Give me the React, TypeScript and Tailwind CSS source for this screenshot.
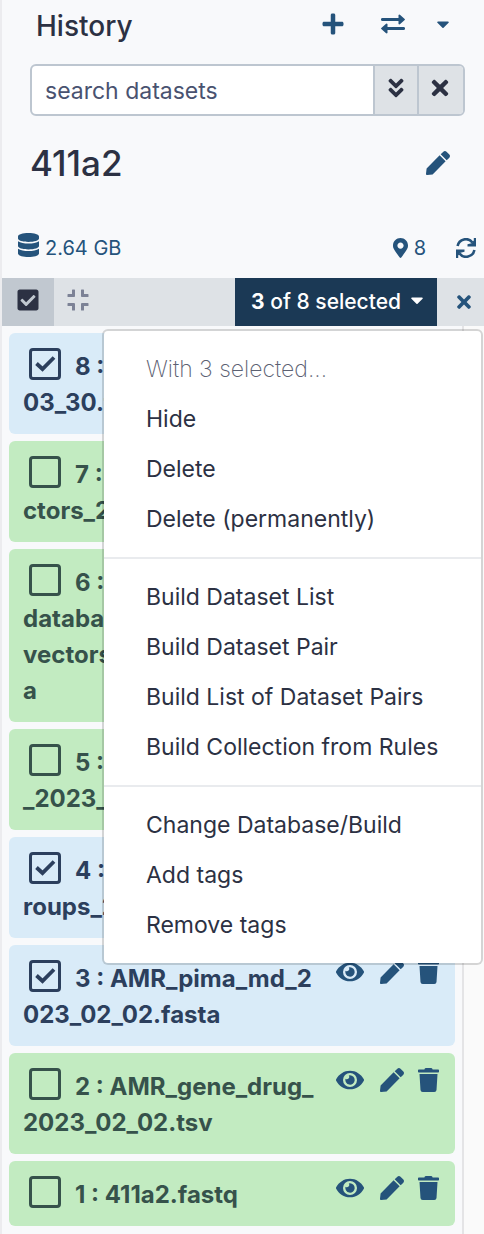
import React from "react";
import {
  FaPlus, FaPen, FaDatabase, FaMapMarkerAlt, FaCheckSquare, FaCompress,
  FaTimes, FaAngleDoubleDown, FaEye, FaTrash, FaCaretDown,
} from "react-icons/fa";

type Dataset = { hid: number; lines: string[]; selected: boolean };

const datasets: Dataset[] = [
  { hid: 8, lines: ["AMR_", "03_30.tsv"], selected: true },
  { hid: 7, lines: ["AMR_ve", "ctors_2023"], selected: false },
  { hid: 6, lines: ["AMR_", "database_", "vectors.fast", "a"], selected: false },
  { hid: 5, lines: ["AMR", "_2023_02"], selected: false },
  { hid: 4, lines: ["AMR_g", "roups_2023"], selected: true },
  { hid: 3, lines: ["AMR_pima_md_2", "023_02_02.fasta"], selected: true },
  { hid: 2, lines: ["AMR_gene_drug_", "2023_02_02.tsv"], selected: false },
  { hid: 1, lines: ["411a2.fastq"], selected: false },
];

const menuGroups = [
  ["Hide", "Delete", "Delete (permanently)"],
  ["Build Dataset List", "Build Dataset Pair", "Build List of Dataset Pairs", "Build Collection from Rules"],
  ["Change Database/Build", "Add tags", "Remove tags"],
];

function ExchangeIcon() {
  return (
    <svg viewBox="0 0 24 20" className="h-5 w-6" aria-hidden="true">
      <path d="M1.4 5.500H18M22.600 14.500H6" stroke="currentColor" strokeWidth="2.900" strokeLinecap="round" fill="none" />
      <path d="M17.500 1Q18.300 .2 19.200 .9L23.700 4.900Q24.200 5.500 23.700 6.100L19.200 10.100Q18.300 10.800 17.500 10ZM6.500 10Q5.700 9.200 4.800 9.900L.3 13.900Q-.2 14.500 .3 15.100L4.800 19.100Q5.700 19.800 6.500 19Z" fill="currentColor" />
    </svg>
  );
}

function SyncIcon() {
  return (
    <svg viewBox="0 0 20 20" className="size-5" aria-hidden="true">
      <path d="M1.600 8A8.400 8.400 0 0 1 16.500 4.500M18.400 12A8.400 8.400 0 0 1 3.500 15.500" fill="none" stroke="currentColor" strokeWidth="2.600" />
      <path d="M20 0V8.400H11.500V6.200L15.500 5.200L17.800 2.600V0ZM0 20V11.600H8.500V13.800L4.500 14.800L2.200 17.400V20Z" fill="currentColor" />
    </svg>
  );
}

function DatasetRow({ item }: { item: Dataset }) {
  return (
    <li
      className={
        item.selected
          ? "flex items-start rounded-md bg-[#d9ebf8] pt-4 pr-4 pb-[13px] pl-3.5 text-[#2c3f5d]"
          : "flex items-start rounded-md bg-[#c2ebc1] pt-4 pr-4 pb-[13px] pl-3.5 text-[#36524b]"
      }
    >
      <label className="min-w-0 flex-1 text-2xl leading-9 font-bold whitespace-nowrap">
        <span className="mr-3.5 ml-1.5 inline-grid size-8 -translate-y-1 place-items-center align-middle">
          <input
            type="checkbox"
            defaultChecked={item.selected}
            className="peer col-start-1 row-start-1 size-8 appearance-none rounded-[4px] border-3 border-current"
          />
          <svg viewBox="0 0 32 32" className="pointer-events-none col-start-1 row-start-1 hidden size-8 peer-checked:block" aria-hidden="true">
            <path d="M7.500 15.500L13.500 21L25 9.500" fill="none" stroke="currentColor" strokeWidth="3.800" />
          </svg>
        </span>
        {item.hid} : {item.lines.map((line, i) => (
          <React.Fragment key={line}>
            {i > 0 && <br />}
            {line}
          </React.Fragment>
        ))}
      </label>
      <div className="-mt-[3px] flex items-center text-[#25537b]">
        <button aria-label="View data" className="mr-4"><FaEye className="size-7" /></button>
        <button aria-label="Edit attributes" className="mr-3.5"><FaPen className="size-6" /></button>
        <button aria-label="Delete dataset"><FaTrash className="h-6 w-[21px]" /></button>
      </div>
    </li>
  );
}

export default function App() {
  return (
    <div className="min-h-screen overflow-hidden border-l-2 border-[#ececef] bg-[#f8f9fb] font-[Inter,sans-serif] text-[#2c3143]">
      <header className="flex h-[52px] items-center pr-[31px] pl-[34px]">
        <h1 className="flex-1 text-[28px] leading-9 font-medium">History</h1>
        <div className="flex items-center pb-1 text-[#25537b]">
          <button aria-label="Create new history" className="mr-9"><FaPlus className="size-6" /></button>
          <button aria-label="Switch to history" className="mr-7"><ExchangeIcon /></button>
          <button aria-label="History options"><FaCaretDown className="size-5" /></button>
        </div>
      </header>

      <div className="mt-3 mr-[19px] ml-7 flex h-[52px] overflow-hidden rounded-md border-2 border-[#bdc6d0] bg-white">
        <input
          aria-label="search datasets"
          placeholder="search datasets"
          className="min-w-0 flex-1 px-[13px] pt-0.5 text-[23px] placeholder:text-[#495270] placeholder:opacity-100"
        />
        <button aria-label="Advanced search" className="flex w-11 items-center justify-center border-l-2 border-[#bdc6d0] bg-[#dee2e6] pb-1">
          <FaAngleDoubleDown className="size-6" />
        </button>
        <button aria-label="Clear search" className="flex w-[46px] items-center justify-center border-l-2 border-[#bdc6d0] bg-[#dee2e6] pr-0.5 pb-1">
          <FaTimes className="size-6" />
        </button>
      </div>

      <div className="mt-6 mr-[34px] ml-7 flex items-center justify-between">
        <h2 className="text-[35px] leading-[46px] font-medium">411a2</h2>
        <button aria-label="Edit name" className="text-[#25537b]"><FaPen className="size-6" /></button>
      </div>

      <div className="mt-11 mr-2 ml-4 flex h-9 items-center text-[#25537b]">
        <button className="flex items-center gap-1.5 text-xl leading-9">
          <FaDatabase className="mb-1.5 h-6 w-[21px]" />2.64 GB
        </button>
        <button className="mr-[30px] ml-auto flex items-center gap-1.5 text-xl leading-9">
          <FaMapMarkerAlt className="h-5 w-[15px]" />8
        </button>
        <button aria-label="Refresh"><SyncIcon /></button>
      </div>

      <div className="relative mt-3 flex h-12 bg-[#dee2e6]">
        <button aria-label="Toggle selectors" className="flex w-[52px] items-center justify-center bg-[#c1c8d0] pb-1"><FaCheckSquare className="size-6" /></button>
        <button aria-label="Collapse all" className="flex w-12 items-center justify-center pb-1 text-[#7c8296]"><FaCompress className="size-6" /></button>
        <button aria-expanded="true" className="ml-auto flex items-center bg-[#1b3955] pr-2.5 pl-4 text-[21px] font-medium whitespace-pre text-white">
          <span><b>3</b> of 8 selected</span>
          <FaCaretDown className="mb-1 ml-1.5 size-5" />
        </button>
        <button aria-label="Clear selection" className="flex w-[47px] items-center justify-center pl-1.5 text-[#25537b]"><FaTimes className="size-5" /></button>

        <div role="menu" className="absolute top-[51px] right-px left-[100px] rounded-md border-2 border-black/15 bg-white bg-clip-padding py-[13px] text-[23px] whitespace-nowrap">
          <p className="px-[42px] py-[7px] leading-9 font-extralight text-[#5c6172]">With 3 selected...</p>
          {menuGroups.map((group, i) => (
            <div key={group[0]} className={i > 0 ? "mt-[13px] border-t-2 border-[#e9ebee] pt-[13px]" : ""}>
              {group.map((label) => (
                <button key={label} role="menuitem" className="block w-full px-[42px] py-[7px] text-left leading-9">{label}</button>
              ))}
            </div>
          ))}
        </div>
      </div>

      <div className="bg-[#fafafa]">
        <div className="mr-5 border-r-2 border-[#e4e4e6] bg-[#f8f9fb]">
          <ul className="flex flex-col gap-[7px] p-[7px] pb-2">
            {datasets.map((item) => <DatasetRow key={item.hid} item={item} />)}
          </ul>
        </div>
      </div>
    </div>
  );
}
